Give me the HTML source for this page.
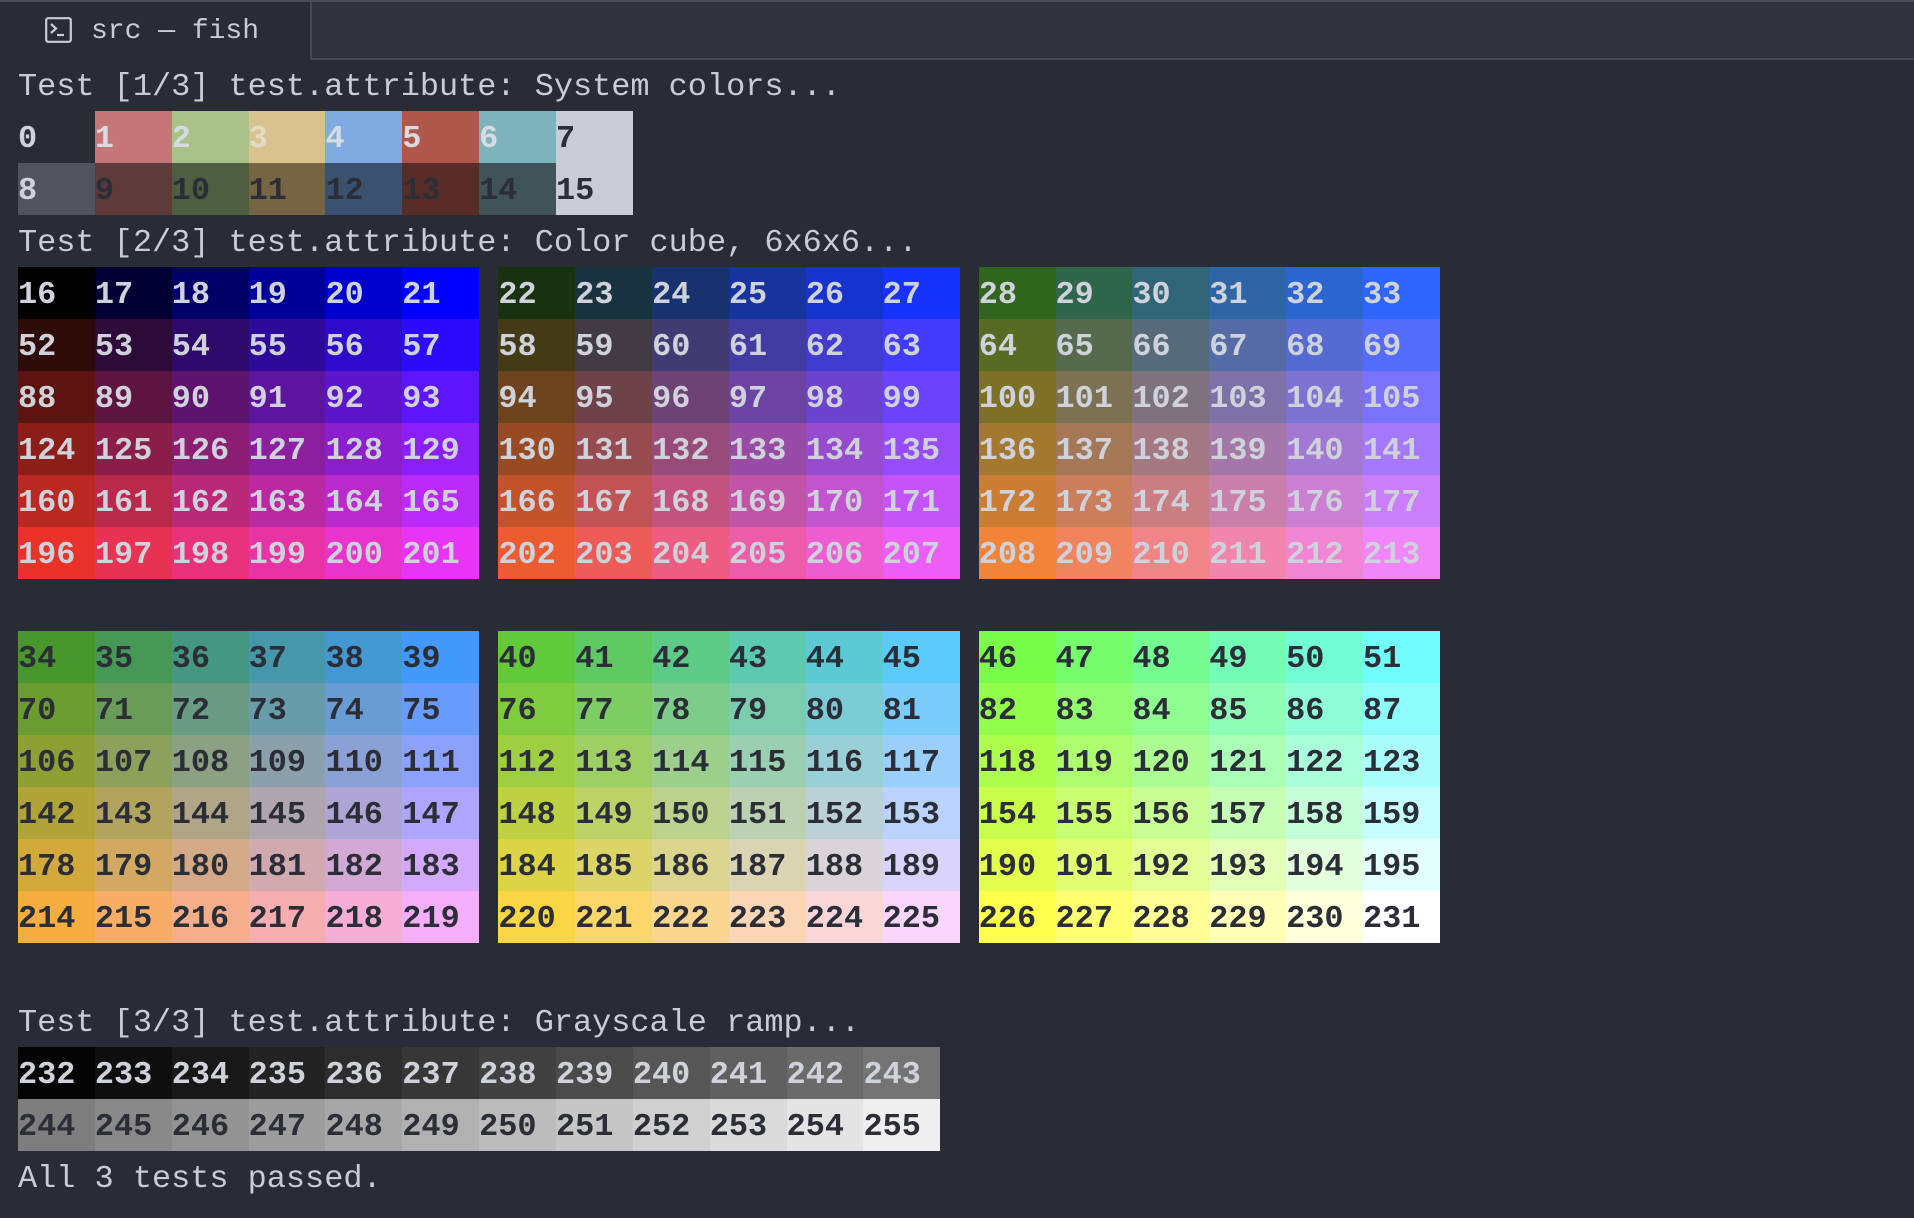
<!DOCTYPE html>
<html><head><meta charset="utf-8">
<style>
html,body{margin:0;padding:0;}
body{width:1914px;height:1218px;background:#292c35;position:relative;overflow:hidden;font-family:"Liberation Mono",monospace;color:#c8ccd4;}
.topb{position:absolute;left:0;top:0;width:1914px;height:2px;background:#4a4d57;}
.inact{position:absolute;left:310px;top:2px;width:1604px;height:56px;background:#31343e;border-left:2px solid #464a54;border-bottom:2px solid #464a54;}
.tabtxt{position:absolute;left:91px;top:12px;font-size:28px;line-height:40px;color:#c8ccd4;}
.icon{position:absolute;left:45px;top:17px;}
.ln{position:absolute;left:18px;height:52px;display:flex;font-size:31.9px;line-height:55px;white-space:pre;}
.ln span{display:inline-block;width:76.86px;height:52px;font-weight:bold;}
.ln span.g{width:19.2px;}
.t{font-weight:normal;}
.lt span{color:#cfd2da;}
.dk span{color:#2b2e37;}
</style></head><body>
<div class="topb"></div>
<div class="inact"></div>
<svg class="icon" width="27" height="26" viewBox="0 0 27 26"><rect x="1.2" y="1.2" width="24.6" height="23.6" rx="2" fill="none" stroke="#c8ccd4" stroke-width="2.2"/><path d="M6 7 L11 11.5 L6 16" fill="none" stroke="#c8ccd4" stroke-width="2.2"/><path d="M12 18 H19" stroke="#c8ccd4" stroke-width="2.2"/></svg>
<div class="tabtxt">src — fish</div>

<div class="ln t" style="top:59px">Test [1/3] test.attribute: System colors...</div>
<div class="ln" style="top:111px"><span style="color:#cfd2da">0</span><span style="background:#c67676;color:#d8dbe2">1</span><span style="background:#a8c28a;color:#d8dbe2">2</span><span style="background:#d9c28d;color:#e0dcc8">3</span><span style="background:#7fabe1;color:#d8dbe2">4</span><span style="background:#b0574c;color:#d8dbe2">5</span><span style="background:#7fb3bc;color:#d8dbe2">6</span><span style="background:#c8ccd4;color:#2b2e37">7</span></div>
<div class="ln" style="top:163px"><span style="background:#50545e;color:#cfd2da">8</span><span style="background:#5e3a3a;color:#2b2e37">9</span><span style="background:#4f5e40;color:#2b2e37">10</span><span style="background:#766545;color:#2b2e37">11</span><span style="background:#3b5170;color:#2b2e37">12</span><span style="background:#582d28;color:#2b2e37">13</span><span style="background:#3f5358;color:#2b2e37">14</span><span style="background:#c8ccd4;color:#2b2e37">15</span></div>
<div class="ln t" style="top:215px">Test [2/3] test.attribute: Color cube, 6x6x6...</div>

<div class="ln lt" style="top:267px"><span class="c">16</span><span class="c">17</span><span class="c">18</span><span class="c">19</span><span class="c">20</span><span class="c">21</span><span class="g"></span><span class="c">22</span><span class="c">23</span><span class="c">24</span><span class="c">25</span><span class="c">26</span><span class="c">27</span><span class="g"></span><span class="c">28</span><span class="c">29</span><span class="c">30</span><span class="c">31</span><span class="c">32</span><span class="c">33</span></div>
<div class="ln lt" style="top:319px"><span class="c">52</span><span class="c">53</span><span class="c">54</span><span class="c">55</span><span class="c">56</span><span class="c">57</span><span class="g"></span><span class="c">58</span><span class="c">59</span><span class="c">60</span><span class="c">61</span><span class="c">62</span><span class="c">63</span><span class="g"></span><span class="c">64</span><span class="c">65</span><span class="c">66</span><span class="c">67</span><span class="c">68</span><span class="c">69</span></div>
<div class="ln lt" style="top:371px"><span class="c">88</span><span class="c">89</span><span class="c">90</span><span class="c">91</span><span class="c">92</span><span class="c">93</span><span class="g"></span><span class="c">94</span><span class="c">95</span><span class="c">96</span><span class="c">97</span><span class="c">98</span><span class="c">99</span><span class="g"></span><span class="c">100</span><span class="c">101</span><span class="c">102</span><span class="c">103</span><span class="c">104</span><span class="c">105</span></div>
<div class="ln lt" style="top:423px"><span class="c">124</span><span class="c">125</span><span class="c">126</span><span class="c">127</span><span class="c">128</span><span class="c">129</span><span class="g"></span><span class="c">130</span><span class="c">131</span><span class="c">132</span><span class="c">133</span><span class="c">134</span><span class="c">135</span><span class="g"></span><span class="c">136</span><span class="c">137</span><span class="c">138</span><span class="c">139</span><span class="c">140</span><span class="c">141</span></div>
<div class="ln lt" style="top:475px"><span class="c">160</span><span class="c">161</span><span class="c">162</span><span class="c">163</span><span class="c">164</span><span class="c">165</span><span class="g"></span><span class="c">166</span><span class="c">167</span><span class="c">168</span><span class="c">169</span><span class="c">170</span><span class="c">171</span><span class="g"></span><span class="c">172</span><span class="c">173</span><span class="c">174</span><span class="c">175</span><span class="c">176</span><span class="c">177</span></div>
<div class="ln lt" style="top:527px"><span class="c">196</span><span class="c">197</span><span class="c">198</span><span class="c">199</span><span class="c">200</span><span class="c">201</span><span class="g"></span><span class="c">202</span><span class="c">203</span><span class="c">204</span><span class="c">205</span><span class="c">206</span><span class="c">207</span><span class="g"></span><span class="c">208</span><span class="c">209</span><span class="c">210</span><span class="c">211</span><span class="c">212</span><span class="c">213</span></div>

<div class="ln dk" style="top:631px"><span class="c">34</span><span class="c">35</span><span class="c">36</span><span class="c">37</span><span class="c">38</span><span class="c">39</span><span class="g"></span><span class="c">40</span><span class="c">41</span><span class="c">42</span><span class="c">43</span><span class="c">44</span><span class="c">45</span><span class="g"></span><span class="c">46</span><span class="c">47</span><span class="c">48</span><span class="c">49</span><span class="c">50</span><span class="c">51</span></div>
<div class="ln dk" style="top:683px"><span class="c">70</span><span class="c">71</span><span class="c">72</span><span class="c">73</span><span class="c">74</span><span class="c">75</span><span class="g"></span><span class="c">76</span><span class="c">77</span><span class="c">78</span><span class="c">79</span><span class="c">80</span><span class="c">81</span><span class="g"></span><span class="c">82</span><span class="c">83</span><span class="c">84</span><span class="c">85</span><span class="c">86</span><span class="c">87</span></div>
<div class="ln dk" style="top:735px"><span class="c">106</span><span class="c">107</span><span class="c">108</span><span class="c">109</span><span class="c">110</span><span class="c">111</span><span class="g"></span><span class="c">112</span><span class="c">113</span><span class="c">114</span><span class="c">115</span><span class="c">116</span><span class="c">117</span><span class="g"></span><span class="c">118</span><span class="c">119</span><span class="c">120</span><span class="c">121</span><span class="c">122</span><span class="c">123</span></div>
<div class="ln dk" style="top:787px"><span class="c">142</span><span class="c">143</span><span class="c">144</span><span class="c">145</span><span class="c">146</span><span class="c">147</span><span class="g"></span><span class="c">148</span><span class="c">149</span><span class="c">150</span><span class="c">151</span><span class="c">152</span><span class="c">153</span><span class="g"></span><span class="c">154</span><span class="c">155</span><span class="c">156</span><span class="c">157</span><span class="c">158</span><span class="c">159</span></div>
<div class="ln dk" style="top:839px"><span class="c">178</span><span class="c">179</span><span class="c">180</span><span class="c">181</span><span class="c">182</span><span class="c">183</span><span class="g"></span><span class="c">184</span><span class="c">185</span><span class="c">186</span><span class="c">187</span><span class="c">188</span><span class="c">189</span><span class="g"></span><span class="c">190</span><span class="c">191</span><span class="c">192</span><span class="c">193</span><span class="c">194</span><span class="c">195</span></div>
<div class="ln dk" style="top:891px"><span class="c">214</span><span class="c">215</span><span class="c">216</span><span class="c">217</span><span class="c">218</span><span class="c">219</span><span class="g"></span><span class="c">220</span><span class="c">221</span><span class="c">222</span><span class="c">223</span><span class="c">224</span><span class="c">225</span><span class="g"></span><span class="c">226</span><span class="c">227</span><span class="c">228</span><span class="c">229</span><span class="c">230</span><span class="c">231</span></div>

<div class="ln t" style="top:995px">Test [3/3] test.attribute: Grayscale ramp...</div>
<div class="ln lt" style="top:1047px"><span class="c">232</span><span class="c">233</span><span class="c">234</span><span class="c">235</span><span class="c">236</span><span class="c">237</span><span class="c">238</span><span class="c">239</span><span class="c">240</span><span class="c">241</span><span class="c">242</span><span class="c">243</span></div>
<div class="ln dk" style="top:1099px"><span class="c">244</span><span class="c">245</span><span class="c">246</span><span class="c">247</span><span class="c">248</span><span class="c">249</span><span class="c">250</span><span class="c">251</span><span class="c">252</span><span class="c">253</span><span class="c">254</span><span class="c">255</span></div>
<div class="ln t" style="top:1151px">All 3 tests passed.</div>

<script>
(function(){
var K={
'000':[0,0,0],'001':[0,0,255],'010':[120,252,74],'011':[112,253,250],
'100':[232,50,42],'101':[232,52,246],'110':[255,255,78],'111':[255,255,255]};
function L(a,b,t){return a+(b-a)*t;}
var cells=document.querySelectorAll('span.c');
for(var i=0;i<cells.length;i++){
 var n=parseInt(cells[i].textContent,10),c;
 if(n>=232){var v=Math.round(4+(n-232)*10.2);c=[v,v,v];}
 else{
  var k=n-16,r=Math.floor(k/36)/5,g=Math.floor(k/6)%6/5,b=k%6/5;c=[];
  for(var j=0;j<3;j++){
   var c00=L(K['000'][j],K['001'][j],b),c01=L(K['010'][j],K['011'][j],b),
       c10=L(K['100'][j],K['101'][j],b),c11=L(K['110'][j],K['111'][j],b);
   c.push(Math.round(L(L(c00,c01,g),L(c10,c11,g),r)));
  }
 }
 cells[i].style.background='rgb('+c.join(',')+')';
}
})();
</script>
</body></html>
